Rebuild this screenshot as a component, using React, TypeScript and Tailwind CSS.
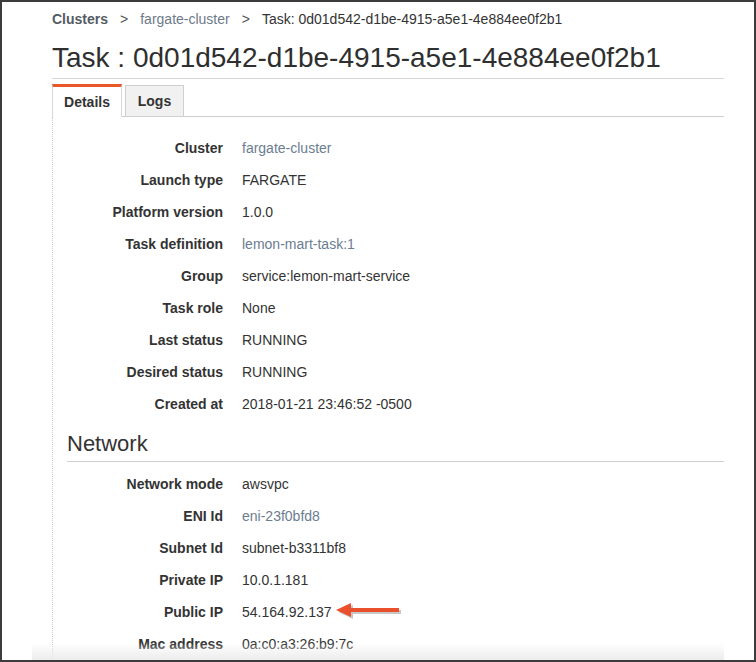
type Row = { label: string; value: string; link?: boolean }

const details: Row[] = [
  { label: 'Cluster', value: 'fargate-cluster', link: true },
  { label: 'Launch type', value: 'FARGATE' },
  { label: 'Platform version', value: '1.0.0' },
  { label: 'Task definition', value: 'lemon-mart-task:1', link: true },
  { label: 'Group', value: 'service:lemon-mart-service' },
  { label: 'Task role', value: 'None' },
  { label: 'Last status', value: 'RUNNING' },
  { label: 'Desired status', value: 'RUNNING' },
  { label: 'Created at', value: '2018-01-21 23:46:52 -0500' },
]

const network: Row[] = [
  { label: 'Network mode', value: 'awsvpc' },
  { label: 'ENI Id', value: 'eni-23f0bfd8', link: true },
  { label: 'Subnet Id', value: 'subnet-b3311bf8' },
  { label: 'Private IP', value: '10.0.1.181' },
  { label: 'Public IP', value: '54.164.92.137' },
  { label: 'Mac address', value: '0a:c0:a3:26:b9:7c' },
]

function Arrow() {
  return (
    <svg width="70" height="22" viewBox="0 0 70 22" className="ml-[4px]">
      <g transform="translate(2,2)" fill="#9a9a9a" opacity="0.55">
        <polygon points="0,9 15,2 15,16" />
        <rect x="14" y="7" width="49" height="4" />
      </g>
      <g fill="#e9502b">
        <polygon points="0,9 15,2 15,16" />
        <rect x="14" y="7" width="49" height="4" />
      </g>
    </svg>
  )
}

function Fields({ rows }: { rows: Row[] }) {
  return (
    <div className="flex flex-col">
      {rows.map((r) => (
        <div key={r.label} className="grid h-8 grid-cols-[170px_1fr] items-center gap-x-[19px]">
          <span className="text-right font-bold text-[#333]">{r.label}</span>
          <span className="flex items-center">
            <span className={r.link ? 'text-[#6b7d91]' : 'text-[#333]'}>{r.value}</span>
            {r.label === 'Public IP' && <Arrow />}
          </span>
        </div>
      ))}
    </div>
  )
}

export default function App() {
  return (
    <div
      className="relative h-[662px] w-[756px] overflow-hidden border-2 border-[#3c3c3c] bg-white text-[14px]"
      style={{ fontFamily: '"Liberation Sans", Arial, sans-serif' }}
    >
      <div className="ml-[50px] mr-[30px] flex flex-col pt-[7px]">
        <nav className="flex items-center leading-5">
          <span className="font-bold text-[#545b64]">Clusters</span>
          <span className="mx-[12px] text-[#555]">&gt;</span>
          <span className="text-[#6d7a88]">fargate-cluster</span>
          <span className="mx-[12px] text-[#555]">&gt;</span>
          <span className="text-[#333]">Task: 0d01d542-d1be-4915-a5e1-4e884ee0f2b1</span>
        </nav>

        <h1 className="mt-[11px] border-b border-[#d5d5d5] pb-[2px] text-[28px] leading-[36px] text-[#2f2f2f]">
          Task : 0d01d542-d1be-4915-a5e1-4e884ee0f2b1
        </h1>

        <div className="mt-[5px] flex items-end">
          <div className="flex h-[33px] w-[70px] items-center justify-center border-x border-t-[3px] border-x-[#d8d8d8] border-t-[#e9572b] font-bold text-[#333]">
            Details
          </div>
          <div className="w-[3px] self-stretch border-b border-[#cfcfcf]" />
          <div className="flex h-[32px] w-[59px] items-center justify-center border border-[#d0d0d0] bg-[#f1f1f1] font-bold text-[#333]">
            Logs
          </div>
          <div className="flex-1 self-stretch border-b border-[#cfcfcf]" />
        </div>

        <div className="h-[560px] border-l border-dotted border-[#cfcfcf] pt-[15px]">
          <Fields rows={details} />

          <h2 className="ml-[14px] mt-[10px] border-b border-[#cfcfcf] pb-[3px] text-[22px] leading-[28px] text-[#333]">
            Network
          </h2>
          <div className="mt-[6px]">
            <Fields rows={network} />
          </div>
        </div>
      </div>

      <div className="absolute bottom-0 left-[30px] h-[17px] w-[692px] bg-gradient-to-b from-[#ffffff00] to-[#ececec]" />
    </div>
  )
}
